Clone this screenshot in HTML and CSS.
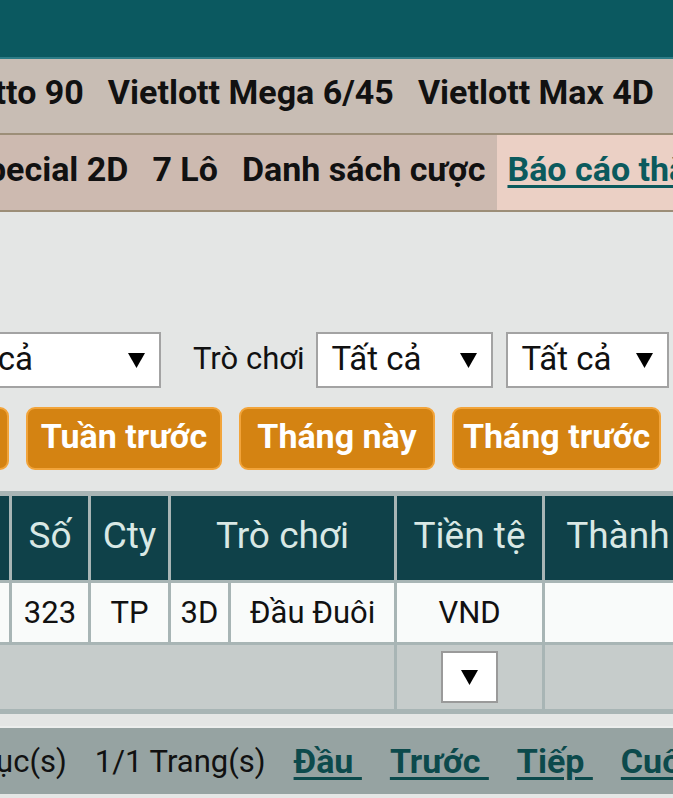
FILE: index.html
```html
<!DOCTYPE html>
<html>
<head>
  <meta charset="utf-8">
  <title>Báo cáo thắng thua</title>
  <link rel="stylesheet" href="styles.css">
</head>
<body>
  <div id="header"></div>

  <div class="menu menu-top">
    <div class="menu-track track-top">
      <a class="menu-item">Lotto 90</a>
      <a class="menu-item">Vietlott Mega 6/45</a>
      <a class="menu-item">Vietlott Max 4D</a>
      <a class="menu-item">Vietlott Power 6/55</a>
    </div>
  </div>
  <div class="menu menu-sub">
    <div class="menu-track track-sub">
      <a class="menu-item">Special 2D</a>
      <a class="menu-item">7 Lô</a>
      <a class="menu-item">Danh sách cược</a>
      <a class="menu-item active"><span>Báo cáo thắng thua</span></a>
    </div>
  </div>

  <div id="content">
    <div class="filters">
      <div class="select sel-cty">
        <span>Tất cả</span>
        <svg class="caret" viewBox="0 0 17 15"><polygon points="0,0 17,0 8.5,15"/></svg>
      </div>
      <span class="label">Trò chơi</span>
      <div class="select sel-game">
        <span>Tất cả</span>
        <svg class="caret" viewBox="0 0 17 15"><polygon points="0,0 17,0 8.5,15"/></svg>
      </div>
      <div class="select sel-type">
        <span>Tất cả</span>
        <svg class="caret" viewBox="0 0 17 15"><polygon points="0,0 17,0 8.5,15"/></svg>
      </div>
    </div>

    <div class="quick">
      <a class="btn">Tuần này</a>
      <a class="btn">Tuần trước</a>
      <a class="btn">Tháng này</a>
      <a class="btn">Tháng trước</a>
    </div>

    <table class="report">
      <colgroup>
        <col class="c-date">
        <col class="c-num">
        <col class="c-cty">
        <col class="c-type">
        <col class="c-game">
        <col class="c-cur">
        <col class="c-amount">
      </colgroup>
      <thead>
        <tr>
          <th>Ngày</th>
          <th>Số</th>
          <th>Cty</th>
          <th colspan="2">Trò chơi</th>
          <th>Tiền tệ</th>
          <th>Thành tiền</th>
        </tr>
      </thead>
      <tbody>
        <tr class="row">
          <td>1</td>
          <td>323</td>
          <td>TP</td>
          <td>3D</td>
          <td>Đầu Đuôi</td>
          <td>VND</td>
          <td></td>
        </tr>
        <tr class="total">
          <td colspan="5"></td>
          <td>
            <div class="mini-select">
              <svg class="caret" viewBox="0 0 17 15"><polygon points="0,0 17,0 8.5,15"/></svg>
            </div>
          </td>
          <td></td>
        </tr>
      </tbody>
    </table>

    <div class="pager">
      <span>Tổng 1 Mục(s)</span>
      <span>1/1 Trang(s)</span>
      <a>Đầu&nbsp;</a>
      <a>Trước&nbsp;</a>
      <a>Tiếp&nbsp;</a>
      <a>Cuối&nbsp;</a>
    </div>
  </div>
</body>
</html>
```

FILE: styles.css
```css
html, body {
  overflow: hidden;
}

body {
  margin: 0;
  background-color: #e4e6e5;
  font-family: Roboto, "Liberation Sans", sans-serif;
  color: #111;
}

#header {
  height: 57px;
  background-color: #0b5960;
  border-bottom: 2px solid #2d7c86;
}

.menu {
  overflow: hidden;
  border-bottom: 2px solid #9c8e78;
}

.menu-top {
  background-color: #c8bdb4;
}

.menu-sub {
  background-color: #cdbab0;
}

.menu-track {
  display: flex;
  white-space: nowrap;
}

.track-top {
  margin-left: -55px;
}

.track-sub {
  margin-left: -46px;
}

.menu-item {
  display: flex;
  align-items: center;
  box-sizing: border-box;
  height: 74px;
  padding: 0 12px 8px;
  font-size: 34px;
  font-weight: bold;
  color: #111;
}

.menu-sub .menu-item {
  height: 75px;
}

.menu-item.active {
  background-color: #ebd0c5;
  padding-left: 10px;
  flex: 1;
}

.menu-item.active span {
  color: #0b5a5d;
  text-decoration: underline;
  text-decoration-thickness: 3px;
  text-underline-offset: 4px;
}

#content {
  padding-top: 120px;
  overflow: hidden;
}

.filters {
  display: flex;
  align-items: center;
  margin-left: -73px;
  white-space: nowrap;
}

.select {
  display: flex;
  align-items: center;
  justify-content: space-between;
  box-sizing: border-box;
  height: 56px;
  padding: 0 14px 4px;
  background-color: white;
  border: 2px solid #a3a3a3;
  font-size: 33px;
}

.select .caret {
  margin-top: 4px;
}

.sel-cty {
  width: 234px;
}

.sel-game {
  width: 177px;
}

.sel-type {
  width: 163px;
  margin-left: 13px;
}

.label {
  margin: 0 11px 4px 32px;
  font-size: 31px;
}

.caret {
  width: 17px;
  height: 15px;
  fill: #000;
}

.quick {
  display: flex;
  gap: 17px;
  margin: 19px 0 0 -187px;
  white-space: nowrap;
}

.btn {
  display: flex;
  align-items: center;
  justify-content: center;
  box-sizing: border-box;
  min-width: 196px;
  height: 63px;
  padding: 0 9px 5px;
  background-color: #d48312;
  border: 2px solid #f2a43a;
  border-radius: 9px;
  color: white;
  font-size: 34px;
  font-weight: bold;
}

.report {
  width: 878px;
  margin: 21px 0 0 -114px;
  table-layout: fixed;
  border-spacing: 3px;
  border-top: 2px solid #a8b5b5;
  border-bottom: 2px solid #a8b5b5;
  background-color: #a8b5b5;
  white-space: nowrap;
}

.c-date { width: 120px; }
.c-num { width: 76px; }
.c-cty { width: 77px; }
.c-type { width: 57px; }
.c-game { width: 163px; }
.c-cur { width: 145px; }
.c-amount { width: 216px; }

.report th {
  height: 78px;
  padding: 0 0 6px;
  overflow: hidden;
  background-color: #0f4149;
  color: #d9e8e5;
  font-size: 37px;
  font-weight: normal;
}

.report td {
  padding: 0;
  text-align: center;
  font-size: 31px;
}

.row td {
  height: 59px;
  background-color: #f9fbfa;
}

.total td {
  height: 64px;
  background-color: #c6cccb;
}

.mini-select {
  display: inline-flex;
  align-items: center;
  justify-content: center;
  vertical-align: middle;
  box-sizing: border-box;
  width: 57px;
  height: 52px;
  background-color: white;
  border: 2px solid #9a9a9a;
}

.pager {
  display: flex;
  align-items: center;
  gap: 28px;
  height: 66px;
  margin: 12px 0 0 -133px;
  border-top: 2px solid #eceeed;
  background-color: #96a3a2;
  font-size: 31px;
  white-space: nowrap;
}

.pager a {
  color: #0c4a4c;
  font-size: 34px;
  font-weight: bold;
  text-decoration: underline;
  text-decoration-thickness: 3px;
  text-underline-offset: 4px;
}
```
